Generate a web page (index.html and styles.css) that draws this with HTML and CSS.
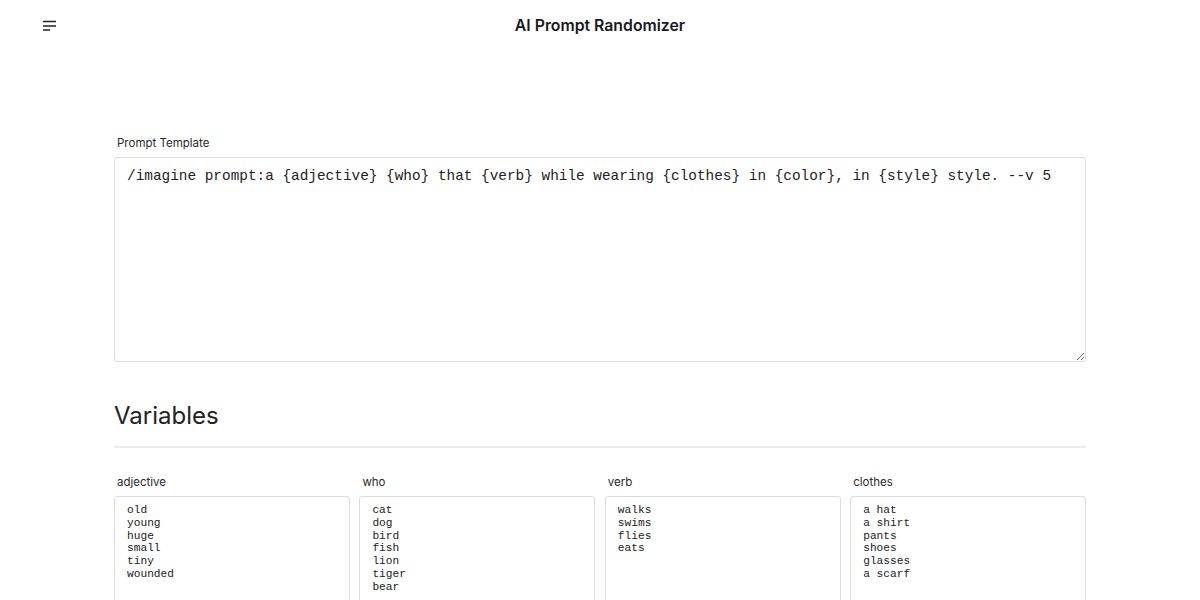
FILE: index.html
```html
<!DOCTYPE html>
<html lang="en">
<head>
<meta charset="utf-8">
<title>AI Prompt Randomizer</title>
<link rel="stylesheet" href="styles.css">
</head>
<body>
<header class="topbar">
  <button class="menu-btn" aria-label="Menu">
    <svg width="14" height="12" viewBox="0 0 14 12"><path d="M0 1.5h13M0 6h13M0 10h7" stroke="#222" stroke-width="1.5" fill="none"/></svg>
  </button>
  <h1 class="title">AI Prompt Randomizer</h1>
  <div></div>
</header>
<main class="page">
  <label class="field-label" for="tpl">Prompt Template</label>
  <textarea id="tpl" class="template">/imagine prompt:a {adjective} {who} that {verb} while wearing {clothes} in {color}, in {style} style. --v 5</textarea>
  <h2 class="section-title">Variables</h2>
  <hr class="divider">
  <div class="vars">
    <div class="var">
      <label class="field-label">adjective</label>
      <textarea class="var-input">old
young
huge
small
tiny
wounded</textarea>
    </div>
    <div class="var">
      <label class="field-label">who</label>
      <textarea class="var-input">cat
dog
bird
fish
lion
tiger
bear</textarea>
    </div>
    <div class="var">
      <label class="field-label">verb</label>
      <textarea class="var-input">walks
swims
flies
eats</textarea>
    </div>
    <div class="var">
      <label class="field-label">clothes</label>
      <textarea class="var-input">a hat
a shirt
pants
shoes
glasses
a scarf</textarea>
    </div>
  </div>
</main>
</body>
</html>
```
FILE: styles.css
```css
* { box-sizing: border-box; }
body {
  margin: 0;
  font-family: Inter, "Noto Sans", sans-serif;
  color: #222;
  background: #fff;
}
.topbar {
  height: 50px;
  display: grid;
  grid-template-columns: 1fr auto 1fr;
  align-items: center;
  padding: 0 43px;
}
.menu-btn {
  border: 0;
  background: none;
  padding: 0;
  width: 14px;
  height: 12px;
  display: block;
  margin-top: 1px;
}
.menu-btn svg { display: block; }
.title {
  margin: 0;
  font-size: 15.8px;
  font-weight: 600;
  color: #1a1a1a;
}
.page {
  width: 972px;
  margin: 0 auto;
  padding-top: 85px;
}
.field-label {
  display: block;
  font-size: 11.5px;
  color: #2a2a2a;
  padding: 1px 0 0 3px;
  line-height: 15px;
  margin-bottom: 6px;
}
.template {
  display: block;
  width: 100%;
  height: 205px;
  border: 1px solid #dcdcdc;
  border-radius: 3px;
  padding: 10px 12px;
  font-family: "Liberation Mono", monospace;
  font-size: 14.4px;
  color: #222;
  resize: vertical;
}
.section-title {
  margin: 39px 0 0;
  font-size: 24px;
  font-weight: 400;
  line-height: 30px;
  color: #222;
}
.divider {
  border: 0;
  border-top: 2px solid #ececec;
  margin: 15px 0 26px;
}
.vars {
  display: grid;
  grid-template-columns: repeat(4, 1fr);
  gap: 9.6px;
}
.var-input {
  display: block;
  width: 100%;
  height: 160px;
  border: 1px solid #dcdcdc;
  border-radius: 3px;
  padding: 7px 12px;
  font-family: "Liberation Mono", monospace;
  font-size: 11.2px;
  line-height: 12.8px;
  color: #222;
  resize: vertical;
}
```
